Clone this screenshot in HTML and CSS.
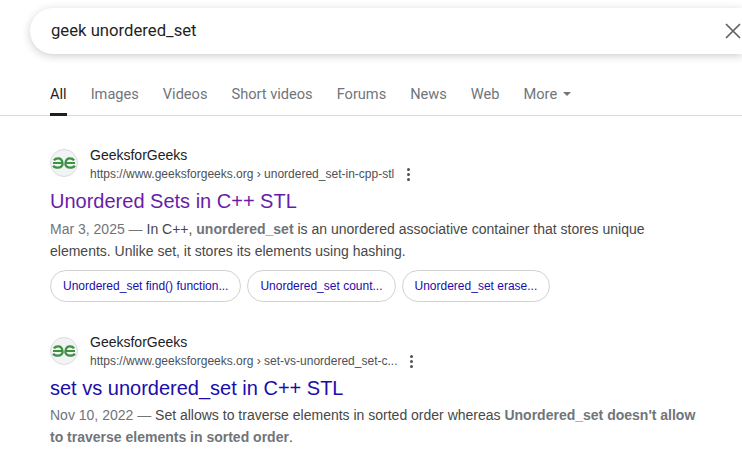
FILE: index.html
```html
<!DOCTYPE html>
<html lang="en">
<head>
<meta charset="utf-8">
<title>geek unordered_set</title>
<link rel="stylesheet" href="styles.css">
</head>
<body>
<div class="search">
  <span class="query">geek unordered_set</span>
  <svg class="close" width="16" height="16" viewBox="0 0 16 16"><path d="M1 1L15 15M15 1L1 15" stroke="#5f6368" stroke-width="1.7" fill="none"/></svg>
</div>
<nav class="tabs">
  <span class="tab active">All</span>
  <span class="tab">Images</span>
  <span class="tab">Videos</span>
  <span class="tab">Short videos</span>
  <span class="tab">Forums</span>
  <span class="tab">News</span>
  <span class="tab">Web</span>
  <span class="tab">More<i class="caret"></i></span>
</nav>
<main class="results">
  <section class="result first">
    <div class="source">
      <span class="favicon"><svg width="24" height="12" viewBox="0 0 24 12"><path d="M1 6H10.500C10.300 3.200 8.600 1.300 6 1.300C4.200 1.300 2.800 2 1.900 3.300M1.200 8.600C2 10 3.800 10.700 6 10.700C8.600 10.700 10.300 9.200 10.800 6.800M23 6H13.500C13.700 3.200 15.400 1.300 18 1.300C19.800 1.300 21.200 2 22.100 3.300M22.800 8.600C22 10 20.200 10.700 18 10.700C15.400 10.700 13.700 9.200 13.200 6.800" stroke="#3f9142" stroke-width="2.200" fill="none"/></svg></span>
      <div class="site">
        <div class="name">GeeksforGeeks</div>
        <div class="url-row"><span class="url">https://www.geeksforgeeks.org › unordered_set-in-cpp-stl</span><span class="dots"><b></b><b></b><b></b></span></div>
      </div>
    </div>
    <h3 class="title visited">Unordered Sets in C++ STL</h3>
    <p class="snippet"><span class="date">Mar 3, 2025 — </span>In C++, <b>unordered_set</b> is an unordered associative container that stores unique elements. Unlike set, it stores its elements using hashing.</p>
    <div class="chips">
      <span class="chip">Unordered_set find() function...</span>
      <span class="chip">Unordered_set count...</span>
      <span class="chip">Unordered_set erase...</span>
    </div>
  </section>
  <section class="result second">
    <div class="source">
      <span class="favicon"><svg width="24" height="12" viewBox="0 0 24 12"><path d="M1 6H10.500C10.300 3.200 8.600 1.300 6 1.300C4.200 1.300 2.800 2 1.900 3.300M1.200 8.600C2 10 3.800 10.700 6 10.700C8.600 10.700 10.300 9.200 10.800 6.800M23 6H13.500C13.700 3.200 15.400 1.300 18 1.300C19.800 1.300 21.200 2 22.100 3.300M22.800 8.600C22 10 20.200 10.700 18 10.700C15.400 10.700 13.700 9.200 13.200 6.800" stroke="#3f9142" stroke-width="2.200" fill="none"/></svg></span>
      <div class="site">
        <div class="name">GeeksforGeeks</div>
        <div class="url-row"><span class="url">https://www.geeksforgeeks.org › set-vs-unordered_set-c...</span><span class="dots"><b></b><b></b><b></b></span></div>
      </div>
    </div>
    <h3 class="title">set vs unordered_set in C++ STL</h3>
    <p class="snippet"><span class="date">Nov 10, 2022 — </span>Set allows to traverse elements in sorted order whereas <b>Unordered_set doesn't allow to traverse elements in sorted order</b>.</p>
  </section>
</main>
</body>
</html>
```
FILE: styles.css
```css
html, body {
  margin: 0;
  padding: 0;
  height: 467px;
  overflow: hidden;
  background: #fff;
  font-family: "Liberation Sans", Arial, sans-serif;
}
.search {
  box-sizing: border-box;
  width: 712px;
  height: 46px;
  margin: 8px 0 0 30px;
  padding: 0 0 0 21px;
  border-radius: 23px 0 0 23px;
  background: #fff;
  box-shadow: 0 2px 8px rgba(32, 33, 36, 0.22);
  display: flex;
  align-items: center;
}
.query {
  font: 16.7px/24px Roboto, sans-serif;
  color: #1f1f1f;
}
.close {
  margin-left: auto;
  margin-right: 1px;
}
.tabs {
  display: flex;
  gap: 24px;
  height: 62px;
  padding-left: 50px;
  border-bottom: 1px solid #dadce0;
  box-sizing: border-box;
}
.tab {
  font: 14.6px/20px Roboto, sans-serif;
  color: #70757a;
  padding-top: 30px;
  box-sizing: border-box;
  height: 62px;
  display: flex;
  align-items: flex-start;
}
.tab.active {
  color: #1f1f1f;
  border-bottom: 3px solid #1f1f1f;
}
.caret {
  width: 0;
  height: 0;
  margin: 8px 0 0 6px;
  border-left: 4px solid transparent;
  border-right: 4px solid transparent;
  border-top: 4px solid #70757a;
}
.results {
  padding-left: 50px;
}
.result.first {
  padding-top: 33px;
  margin-bottom: 35px;
}
.source {
  display: flex;
  gap: 12px;
  align-items: flex-start;
  height: 28px;
}
.favicon {
  box-sizing: border-box;
  width: 28px;
  height: 28px;
  border-radius: 50%;
  background: #f1f3f4;
  border: 1px solid #dadce0;
  display: flex;
  align-items: center;
  justify-content: center;
}
.site {
  margin-top: -3px;
}
.second .site {
  margin-top: -4px;
}
.name {
  font-size: 14px;
  line-height: 18px;
  color: #202124;
}
.url-row {
  display: flex;
  align-items: center;
  height: 18px;
  margin-top: 1px;
}
.url {
  font-size: 12px;
  line-height: 18px;
  color: #4d5156;
}
.dots {
  display: flex;
  flex-direction: column;
  gap: 2px;
  margin-left: 13px;
}
.dots b {
  width: 3px;
  height: 3px;
  border-radius: 50%;
  background: #4d5156;
}
.title {
  margin: 11px 0 0;
  font-size: 20px;
  line-height: 26px;
  font-weight: 400;
  color: #1a0dab;
}
.second .title {
  margin-top: 10px;
}
.title.visited {
  color: #681da8;
}
.snippet {
  margin: 4px 0 0;
  width: 646px;
  font-size: 14px;
  line-height: 22px;
  color: #474747;
}
.second .snippet {
  margin-top: 3px;
}
.snippet b {
  color: #70757a;
}
.date {
  color: #70757a;
}
.chips {
  display: flex;
  gap: 6px;
  margin-top: 8px;
}
.chip {
  box-sizing: border-box;
  height: 32px;
  padding: 0 12px;
  border: 1px solid #d2d2d2;
  border-radius: 16px;
  font-size: 12px;
  line-height: 30px;
  color: #1a0dab;
}
```
